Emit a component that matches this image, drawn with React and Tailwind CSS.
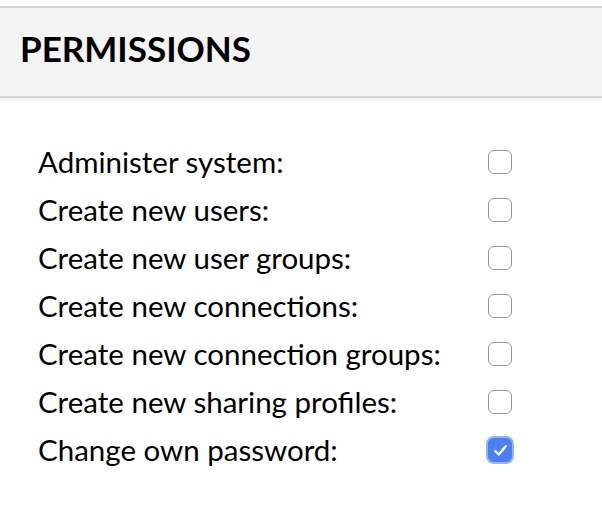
import React from "react";

const rows = [
  ["Administer system:", false],
  ["Create new users:", false],
  ["Create new user groups:", false],
  ["Create new connections:", false],
  ["Create new connection groups:", false],
  ["Create new sharing profiles:", false],
  ["Change own password:", true],
];

function Box({ checked }) {
  if (checked) {
    return (
      <div className="w-[24px] h-[24px] rounded-[6px] bg-[#4a80f0] ring-[2px] ring-[#94b4f6] flex items-center justify-center">
        <svg width="15" height="13" viewBox="0 0 15 13" fill="none">
          <path d="M2.2 7 L5.8 10.5 L12.8 2.2" stroke="white" strokeWidth="2.4" strokeLinecap="round" strokeLinejoin="round" />
        </svg>
      </div>
    );
  }
  return <div className="w-[24px] h-[24px] rounded-[6px] border border-[#9a9a9a] bg-white" />;
}

export default function App() {
  return (
    <div className="w-[602px] h-[508px] bg-white" style={{ fontFamily: "Lato, 'Open Sans', sans-serif" }}>
      <div className="pt-[6px]">
        <div className="border-t-2 border-b-2 border-[#d6d6d6] bg-[#f4f4f4] h-[92px] flex items-center px-5 pb-[8px] shadow-[0_2px_3px_rgba(0,0,0,0.08)]">
          <h2 className="text-[35px] font-bold text-black leading-none">PERMISSIONS</h2>
        </div>
      </div>
      <div className="pt-[40px] pl-[38px]">
        {rows.map(([label, checked]) => (
          <div key={label} className="h-[48px] flex items-center">
            <div className="w-[450px] text-[29.5px] text-black leading-none">{label}</div>
            <Box checked={checked} />
          </div>
        ))}
      </div>
    </div>
  );
}
